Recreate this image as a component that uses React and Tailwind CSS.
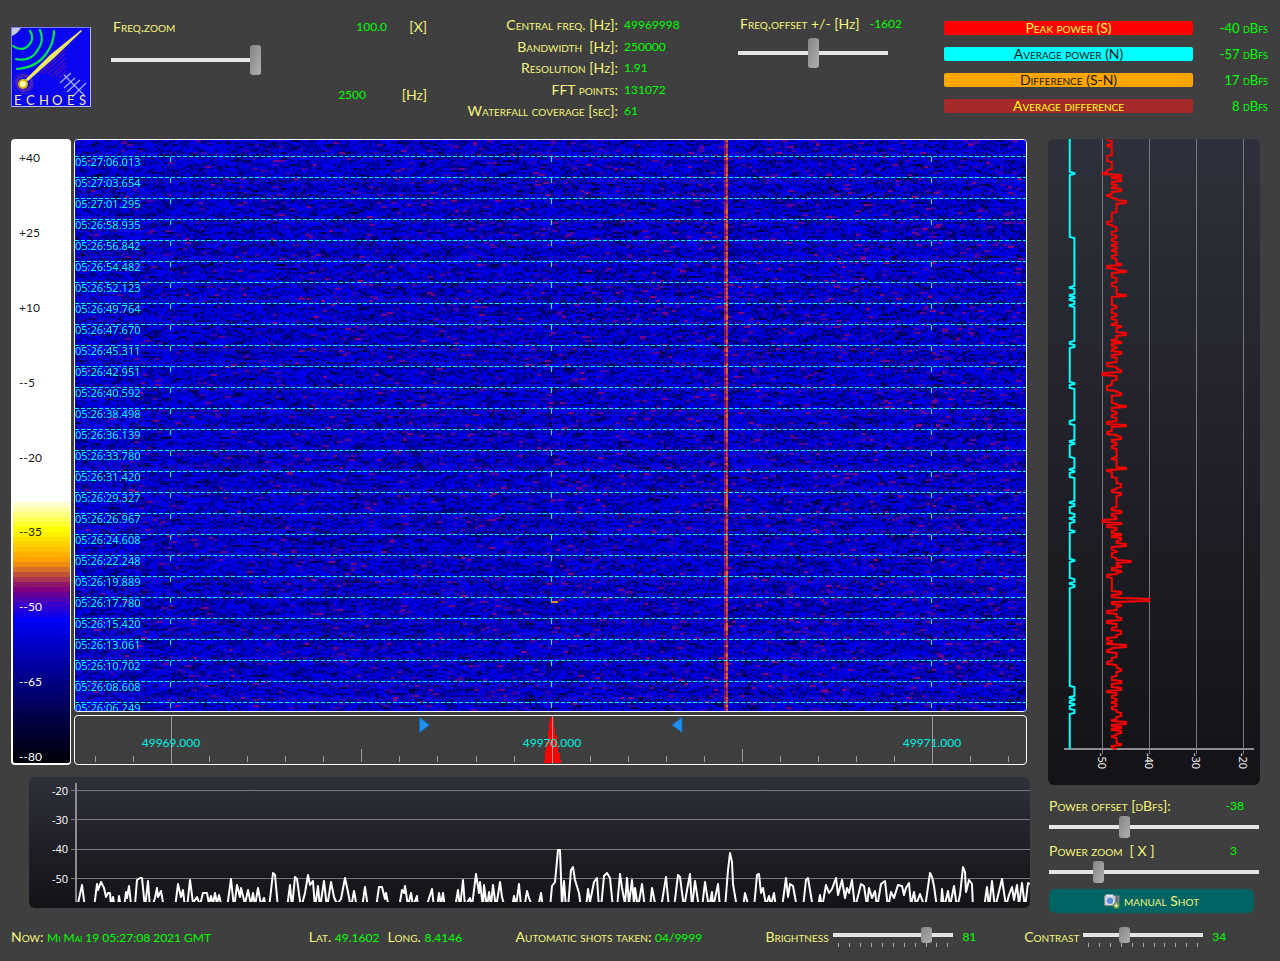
import { useEffect, useRef } from 'react'

const STATS = [
  ['Central freq. [Hz]:', '49969998'],
  ['Bandwidth \u00a0[Hz]:', '250000'],
  ['Resolution [Hz]:', '1.91'],
  ['FFT points:', '131072'],
  ['Waterfall coverage [sec]:', '61'],
]

const POWERS = [
  { label: 'Peak power (S)', value: '-40 dBfs', style: 'bg-[#ff0000] text-[#ffff40]' },
  { label: 'Average power (N)', value: '-57 dBfs', style: 'bg-[#00ffff] text-[#102020]' },
  { label: 'Difference (S-N)', value: '17 dBfs', style: 'bg-[#ffa500] text-[#201800]' },
  { label: 'Average difference', value: '8 dBfs', style: 'bg-[#a52a2a] text-[#ffff20]' },
]

const SCALE_LABELS = ['+40', '+25', '+10', '--5', '--20', '--35', '--50', '--65', '--80']

const SCALE_BANDS = [
  'bg-[#ffffd0]', 'bg-[#ffffa8]', 'bg-[#ffff80]', 'bg-[#ffff58]', 'bg-[#ffff2c]', 'bg-[#ffff00]',
  'bg-[#fff000]', 'bg-[#ffe000]', 'bg-[#ffd000]', 'bg-[#ffc000]', 'bg-[#ffb000]', 'bg-[#ffa000]',
  'bg-[#ee8c10]', 'bg-[#d67028]', 'bg-[#c05038]', 'bg-[#a83450]', 'bg-[#901868]', 'bg-[#800080]',
  'bg-[#680098]', 'bg-[#5000b0]', 'bg-[#3800c8]', 'bg-[#2800d8]', 'bg-[#1400e8]',
]

const TIMES = [
  '05:27:06.013', '05:27:03.654', '05:27:01.295', '05:26:58.935', '05:26:56.842', '05:26:54.482',
  '05:26:52.123', '05:26:49.764', '05:26:47.670', '05:26:45.311', '05:26:42.951', '05:26:40.592',
  '05:26:38.498', '05:26:36.139', '05:26:33.780', '05:26:31.420', '05:26:29.327', '05:26:26.967',
  '05:26:24.608', '05:26:22.248', '05:26:19.889', '05:26:17.780', '05:26:15.420', '05:26:13.061',
  '05:26:10.702', '05:26:08.608', '05:26:06.249',
]

// x,y pairs; everything below 902 is cut off by the plot area
const SPECTRUM =
  '77,908 82,885 85,908 94,908 97,884 98,890 101,882 104,888 106,897 108,893 110,893 111,906 113,897 115,908 ' +
  '118,908 119,896 121,908 124,908 126,892 127,898 129,886 131,904 135,904 137,880 140,878 142,878 145,908 ' +
  '148,881 150,908 153,904 155,898 157,888 158,897 161,891 164,908 175,908 178,884 181,897 183,890 185,908 ' +
  '187,908 190,880 193,903 197,897 200,905 203,893 207,893 209,904 211,896 213,904 215,893 217,904 219,895 222,908 ' +
  '227,908 231,879 234,908 237,885 240,897 241,888 245,904 248,890 251,905 253,893 255,906 258,888 261,905 264,898 ' +
  '266,908 269,908 273,873 275,875 278,908 287,908 290,885 292,908 295,877 297,879 301,908 305,893 308,875 310,885 ' +
  '313,881 315,908 318,886 320,908 324,881 327,908 331,882 334,897 337,904 341,899 345,878 348,892 351,908 354,891 ' +
  '357,908 362,908 365,887 368,908 376,908 379,887 382,887 385,899 386,893 389,908 399,908 402,890 404,893 405,886 ' +
  '408,906 411,893 413,906 417,896 418,908 426,908 432,889 434,908 437,908 439,893 441,905 443,893 445,908 ' +
  '455,908 458,890 460,908 463,880 465,906 470,898 472,906 476,874 479,893 480,882 483,908 484,885 487,908 489,892 ' +
  '491,905 493,885 496,908 500,882 502,897 505,908 512,908 514,896 516,906 519,884 521,906 525,903 527,891 529,898 ' +
  '533,908 538,908 541,893 543,908 550,908 552,886 555,882 558,850 560,850 562,906 564,881 566,908 568,908 571,870 ' +
  '573,867 575,880 579,893 581,908 586,908 588,889 590,902 594,882 597,878 599,908 601,908 604,876 607,873 610,878 ' +
  '613,908 617,908 620,874 622,888 625,904 627,878 629,904 632,880 634,904 635,888 638,908 642,884 645,908 650,908 ' +
  '652,888 656,908 661,908 666,877 669,908 674,908 678,875 680,877 684,908 687,890 690,874 692,908 695,881 699,908 ' +
  '702,908 705,882 709,908 712,892 713,908 718,884 720,908 725,908 728,870 730,853 732,862 733,884 737,908 743,908 ' +
  '745,893 749,908 754,908 757,875 759,874 761,893 763,888 766,905 769,896 771,905 774,893 776,908 782,908 786,878 ' +
  '788,897 790,884 793,886 797,908 803,908 806,880 808,878 813,908 818,908 820,895 822,908 826,885 829,893 832,889 ' +
  '836,878 838,895 842,880 845,898 847,888 849,893 852,880 855,908 861,884 864,886 867,906 869,888 872,898 875,891 ' +
  '877,908 881,884 885,881 888,908 891,892 894,898 898,885 902,886 904,895 906,888 909,883 911,905 914,892 916,905 ' +
  '920,894 925,908 930,873 932,877 934,886 937,908 941,908 942,889 944,908 948,891 950,906 954,886 957,908 960,895 ' +
  '963,867 965,872 966,892 969,880 972,884 973,908 984,908 987,887 989,908 992,881 995,908 1002,879 1006,906 ' +
  '1009,895 1012,887 1014,900 1017,885 1019,905 1022,883 1025,908 1028,883 1030,884'

// [row, dB] wherever the level changes
const PEAK_HISTORY = [
  [139, -49], [141, -48], [145, -49], [147, -48], [156, -49], [162, -48], [170, -49], [173, -50], [175, -46],
  [177, -48], [179, -46], [182, -48], [185, -47], [187, -48], [189, -46], [192, -48], [195, -49], [197, -48],
  [199, -47], [201, -45], [204, -47], [213, -48], [222, -49], [225, -48], [227, -47], [232, -48], [236, -47],
  [239, -48], [242, -47], [245, -48], [247, -47], [250, -48], [252, -47], [256, -48], [259, -47], [264, -46],
  [266, -49], [269, -47], [271, -45], [273, -48], [278, -47], [283, -48], [287, -47], [295, -45], [297, -48],
  [306, -47], [309, -48], [314, -47], [317, -48], [320, -47], [324, -48], [326, -46], [328, -47], [333, -45],
  [336, -47], [340, -48], [342, -46], [344, -48], [347, -47], [349, -48], [352, -46], [355, -48], [358, -47],
  [363, -49], [367, -47], [370, -46], [373, -50], [376, -47], [381, -48], [386, -49], [391, -47], [393, -46],
  [396, -48], [404, -47], [406, -45], [408, -48], [412, -47], [415, -48], [418, -47], [422, -49], [425, -45],
  [427, -48], [432, -49], [435, -47], [437, -46], [440, -48], [443, -47], [446, -48], [449, -47], [458, -48],
  [460, -47], [468, -45], [470, -49], [472, -48], [478, -47], [484, -46], [488, -47], [490, -48], [493, -46],
  [496, -47], [508, -48], [511, -46], [514, -48], [517, -47], [520, -50], [523, -46], [525, -49], [528, -47],
  [531, -48], [534, -46], [536, -48], [538, -46], [541, -47], [544, -45], [547, -48], [551, -47], [553, -48],
  [558, -47], [561, -44], [563, -47], [566, -46], [568, -48], [571, -46], [573, -47], [575, -49], [578, -48],
  [592, -46], [595, -48], [598, -46], [599, -40], [602, -48], [605, -46], [607, -47], [611, -49], [614, -47],
  [618, -46], [621, -49], [624, -47], [628, -48], [631, -46], [635, -47], [638, -49], [641, -48], [643, -49],
  [645, -45], [648, -48], [650, -49], [653, -47], [658, -48], [662, -49], [665, -47], [669, -46], [672, -47],
  [677, -48], [681, -46], [684, -48], [688, -46], [691, -49], [693, -47], [696, -48], [699, -47], [702, -48],
  [704, -47], [707, -48], [710, -47], [713, -46], [717, -47], [720, -48], [722, -45], [725, -48], [727, -46],
  [729, -48], [731, -46], [734, -47], [736, -48], [738, -47], [744, -46], [746, -48], [749, -47],
]

const NOISE_HISTORY = [
  [139, -57], [173, -56], [175, -57], [238, -56], [287, -57], [289, -56], [295, -57], [297, -56], [299, -57],
  [301, -56], [305, -57], [307, -56], [342, -57], [345, -56], [348, -57], [383, -56], [385, -57], [389, -56],
  [421, -57], [425, -56], [441, -57], [443, -56], [445, -57], [458, -56], [469, -57], [471, -56], [473, -57],
  [478, -56], [502, -57], [504, -56], [507, -57], [514, -56], [518, -57], [520, -56], [523, -57], [531, -56],
  [533, -57], [560, -56], [562, -57], [579, -56], [583, -57], [585, -56], [588, -57], [687, -56], [697, -57],
  [699, -56], [701, -57], [704, -56], [706, -57], [710, -56], [714, -57], [749, -57],
]

const dbToX = (db) => 1102.5 + (db + 50) * 4.68

function historyPoints(runs) {
  const points = []
  runs.forEach(([row, db], i) => {
    if (i > 0) points.push(`${dbToX(runs[i - 1][1])},${row - 1}`)
    points.push(`${dbToX(db)},${row}`)
  })
  return points.join(' ')
}

function Slider({ id, value, size, className = '' }) {
  const thumbs = {
    lg: 'h-[30px] [&::-webkit-slider-thumb]:h-[30px] [&::-webkit-slider-thumb]:-mt-[13px]',
    md: 'h-[22px] [&::-webkit-slider-thumb]:h-[22px] [&::-webkit-slider-thumb]:-mt-[9px]',
    sm: 'h-4 [&::-webkit-slider-thumb]:h-4 [&::-webkit-slider-thumb]:-mt-[6px]',
  }
  return (
    <input
      id={id}
      type="range"
      min="0"
      max="100"
      defaultValue={value}
      className={`block appearance-none bg-transparent [&::-webkit-slider-runnable-track]:h-1 [&::-webkit-slider-runnable-track]:bg-[#e3e5e3] [&::-webkit-slider-thumb]:appearance-none [&::-webkit-slider-thumb]:w-[11px] [&::-webkit-slider-thumb]:rounded-[3px] [&::-webkit-slider-thumb]:bg-linear-to-br [&::-webkit-slider-thumb]:from-[#858585] [&::-webkit-slider-thumb]:to-[#b0b0b0] ${thumbs[size]} ${className}`}
    />
  )
}

function TickSlider({ id, value }) {
  return (
    <div className="w-[120px]">
      <Slider id={id} value={value} size="sm" className="w-full" />
      <div className="flex justify-between px-[5px]">
        {Array.from({ length: 11 }, (_, i) => (
          <span key={i} className="h-1 w-px bg-[#b0b0a0]" />
        ))}
      </div>
    </div>
  )
}

function Logo() {
  return (
    <svg viewBox="0 0 80 80" className="size-20 shrink-0" role="img" aria-label="Echoes">
      <rect x="0.5" y="0.5" width="79" height="79" fill="#0a06f0" stroke="#7880ff" />
      <path d="M0.5 79.5h79v-79" fill="none" stroke="#b4b8ff" />
      <path d="M1 1h9L6 6 1 9z" fill="#c8ccd4" />
      <g fill="none" stroke="#00e848" strokeWidth="2.2" strokeLinecap="round">
        <path d="M2 19c5 4 12 4 16-1 4-4 4-10 1-14" />
        <path d="M5 32c9 2 17-1 21-8 5-6 6-14 3-21" />
        <path d="M6 42c12-1 22-5 29-15 6-8 8-15 8-23" />
      </g>
      <path d="M29 46l26-24M32 47l22-20M37 47l17-15M40 49l15-13M44 49l11-10M48 51l7-7" stroke="#7a1490" strokeWidth="1" />
      <g fill="none" stroke="#3c20c0">
        <circle cx="12" cy="57" r="10" />
        <circle cx="13" cy="56" r="7.5" strokeWidth="3" stroke="#4a22c0" />
      </g>
      <path d="M14 53L39 28 70 3 71 4 43 31 17 54z" fill="#f0e860" />
      <circle cx="12" cy="57" r="5" fill="#d8b400" />
      <circle cx="12" cy="57" r="3" fill="#ffffb0" />
      <path d="M53 48l20 20M49 56l11-10M53 61l11-10M56 65l13-12M61 70l14-14" stroke="#a8b0ec" strokeWidth="1.2" />
      <text y="78" fontSize="13" fill="#f4ec80" fontFamily="Lato, sans-serif">
        {['E', 'C', 'H', 'O', 'E', 'S'].map((c, i) => (
          <tspan key={i} x={[3, 15, 28, 41, 56, 68][i]}>{c}</tspan>
        ))}
      </text>
    </svg>
  )
}

function CameraIcon() {
  return (
    <svg viewBox="0 0 16 15" className="h-[15px] w-4" aria-hidden="true">
      <rect x="10" y="2" width="5" height="9" fill="#6c7078" stroke="#a8a8a8" strokeWidth="0.6" />
      <rect x="0.5" y="1.5" width="11" height="10" rx="1" fill="#c8c8cc" stroke="#8c8c90" />
      <rect x="2" y="0.5" width="7" height="2" fill="#e8e8ea" />
      <circle cx="6" cy="6.8" r="4" fill="#e8f0ff" />
      <circle cx="6" cy="6.8" r="3.2" fill="#5a90d8" />
      <circle cx="12.3" cy="11.6" r="3.2" fill="#5c9c28" />
      <path d="M12.3 9.6v4M10.3 11.6h4" stroke="#fff" strokeWidth="1.3" />
    </svg>
  )
}

const COLS = 476
const ROWS = 285

function drawNoise(canvas) {
  const ctx = canvas.getContext('2d')
  const img = ctx.createImageData(COLS, ROWS)
  let seed = 20210519
  const rand = () => {
    seed = (seed * 1664525 + 1013904223) >>> 0
    return seed / 4294967296
  }
  const put = (x, y, r, g, b) => {
    const i = (y * COLS + x) * 4
    img.data[i] = r
    img.data[i + 1] = g
    img.data[i + 2] = b
    img.data[i + 3] = 255
  }

  for (let y = 0; y < ROWS; y++) {
    let level = 0.7
    for (let x = 0; x < COLS; x++) {
      level = level * 0.45 + (1 - Math.pow(rand(), 2.4)) * 0.55
      put(x, y, 0, 0, Math.round(Math.max(0, Math.min(236, level * 245 + 15))))
    }
    // weak echoes, denser to the right
    for (let n = 0; n < 12; n++) {
      const x = Math.floor(Math.pow(rand(), 0.75) * (COLS - 3))
      const r = 40 + Math.pow(rand(), 2) * 90
      const w = 2 + Math.floor(rand() * 2)
      for (let k = 0; k < w; k++) put(x + k, y, r, 0, 210 - r * 0.6)
    }
    // carrier
    const heat = rand()
    const c = 326
    put(c - 1, y, 90 + heat * 90, heat * 40, 130 - heat * 40)
    put(c, y, 150 + heat * 80, 30 + heat * 80, 80 - heat * 50)
  }
  for (let x = 239; x < 242; x++) put(x, 230, 240, 140, 10)
  ctx.putImageData(img, 0, 0)
}

function Waterfall() {
  const ref = useRef(null)
  useEffect(() => drawNoise(ref.current), [])

  return (
    <div className="relative min-h-[573px] flex-1 overflow-hidden rounded border border-white bg-[#0000c8]">
      <canvas ref={ref} width={COLS} height={ROWS} className="absolute inset-0 size-full [image-rendering:pixelated]" />
      <svg viewBox="0 0 951 571" preserveAspectRatio="none" className="absolute inset-0 size-full" aria-hidden="true">
        <g stroke="#00ffff" shapeRendering="crispEdges">
          {TIMES.map((t, i) => (
            <g key={t}>
              <path d={`M0 ${16.5 + i * 21}h951`} strokeDasharray="4 2" />
              <path d={`M95.5 ${17 + i * 21}v5M476.5 ${17 + i * 21}v5M856.5 ${17 + i * 21}v5`} />
            </g>
          ))}
        </g>
      </svg>
      <ol className="absolute left-0 top-[11px] font-['Noto_Sans',sans-serif] text-[11px] leading-[21px] text-[#00ffff]">
        {TIMES.map((t) => (
          <li key={t}>{t}</li>
        ))}
      </ol>
    </div>
  )
}

function Ruler() {
  const ticks = Array.from({ length: 25 }, (_, i) => i)
  return (
    <svg viewBox="0 0 951 48" preserveAspectRatio="none" className="h-[50px] w-full rounded border border-white">
      <path d="M469 47v-3h1v-9h1v-9h2v-11h1v-9h1v-5h4v10h1v8h2v9h1v9h2v7h1v3z" fill="#ff0000" />
      <g stroke="#9c9c9c" shapeRendering="crispEdges">
        {ticks.map((i) => {
          const x = Math.round(20 + i * 38.05) + 0.5
          const top = i % 10 === 2 ? 0 : i % 10 === 7 ? 33 : 40
          return <path key={i} d={`M${x} ${top}V${top ? 46 : 48}`} />
        })}
      </g>
      <path d="M344.500 1.500v15l10-7.500z" fill="#2090f0" stroke="#1868b0" />
      <path d="M607 1.500v15l-10-7.500z" fill="#2090f0" stroke="#1868b0" />
      <g fill="#00f0e0" fontSize="12" textAnchor="middle" fontFamily="Lato, sans-serif">
        <text x="96" y="31">49969.000</text>
        <text x="477" y="31">49970.000</text>
        <text x="857" y="31">49971.000</text>
      </g>
    </svg>
  )
}

function ColorScale() {
  return (
    <div className="grid w-[60px] shrink-0 overflow-hidden rounded border-2 border-r border-white bg-white">
      <div className="col-start-1 row-start-1 flex flex-col">
        <div className="flex-1" />
        {SCALE_BANDS.map((c) => (
          <div key={c} className={`h-[5px] ${c}`} />
        ))}
        <div className="h-[146px] bg-linear-to-b from-[#0000fc] to-[#000008]" />
      </div>
      <ul className="col-start-1 row-start-1 flex flex-col justify-between pt-2.5 text-xs leading-[13px] pl-1.5">
        {SCALE_LABELS.map((l, i) => (
          <li key={l} className={i > 5 ? 'text-white' : 'text-[#202020]'}>{l}</li>
        ))}
      </ul>
    </div>
  )
}

function SpectrumChart() {
  return (
    <svg viewBox="29 777 1001 131" preserveAspectRatio="none"
      className="ml-[18px] mt-3 block h-[131px] rounded-md bg-linear-to-b from-[#2e313b] via-[#202028] to-[#121217]">
      <clipPath id="plot"><rect x="76" y="777" width="954" height="125" /></clipPath>
      <g stroke="#77777d" shapeRendering="crispEdges">
        {[790, 819, 849, 878].map((y) => (
          <path key={y} d={`M71 ${y + 0.5}H1030`} />
        ))}
      </g>
      <path d="M76 783v119" stroke="#8c8c90" strokeWidth="2" />
      <g fill="#ffffff" fontSize="11" textAnchor="end" fontFamily="'Open Sans', sans-serif">
        <text x="68" y="795">-20</text>
        <text x="68" y="824">-30</text>
        <text x="68" y="853">-40</text>
        <text x="68" y="883">-50</text>
      </g>
      <polyline points={SPECTRUM} clipPath="url(#plot)" fill="none" stroke="#ffffff" strokeWidth="2" strokeLinejoin="round" />
    </svg>
  )
}

function PowerHistory() {
  return (
    <svg viewBox="1048 139 212 646" preserveAspectRatio="none"
      className="min-h-[646px] w-full flex-1 rounded-md bg-linear-to-b from-[#2e313b] via-[#202028] to-[#121217]">
      <g stroke="#77777d" shapeRendering="crispEdges">
        {[1102, 1149, 1196, 1243].map((x) => (
          <path key={x} d={`M${x + 0.5} 139V754`} />
        ))}
      </g>
      <path d="M1064 749h190" stroke="#8c8c90" strokeWidth="2" />
      <g fill="#ffffff" fontSize="11" fontFamily="'Open Sans', sans-serif">
        {[[1102, '-50'], [1149, '-40'], [1196, '-30'], [1243, '-20']].map(([x, label]) => (
          <text key={label} transform={`translate(${x - 4} 753) rotate(90)`}>{label}</text>
        ))}
      </g>
      <g fill="none" strokeWidth="2">
        <polyline points={historyPoints(NOISE_HISTORY)} stroke="#00ffff" />
        <polyline points={historyPoints(PEAK_HISTORY)} stroke="#ff0000" />
      </g>
    </svg>
  )
}

function Header() {
  return (
    <header className="grid h-[139px] grid-cols-[100fr_329fr_298fr_206fr_324fr] pl-[11px] pr-3 leading-[14px]">
      <div className="pt-[27px]"><Logo /></div>

      <div className="w-[316px] pt-5">
        <div className="flex">
          <label htmlFor="zoom" className="flex-1 pl-0.5">Freq.zoom</label>
          <output htmlFor="zoom" className="text-xs leading-[14px] text-[#00ff00]">100.0</output>
          <span className="w-10 text-right">[X]</span>
        </div>
        <Slider id="zoom" value={100} size="lg" className="mt-[11px] w-[150px]" />
        <div className="mt-[13px] flex justify-end">
          <output htmlFor="zoom" className="text-xs leading-[14px] text-[#00ff00]">2500</output>
          <span className="w-[61px] text-right">[Hz]</span>
        </div>
      </div>

      <dl className="mt-3.5 grid h-[107px] grid-cols-[178px_1fr] content-between gap-x-1.5 leading-[21px]">
        {STATS.map(([name, value]) => (
          <div key={name} className="contents">
            <dt className="text-right">{name}</dt>
            <dd className="text-xs leading-[21px] text-[#00ff00]">{value}</dd>
          </div>
        ))}
      </dl>

      <div className="pt-[17px]">
        <div className="flex w-[164px] justify-between pl-0.5">
          <label htmlFor="offset">Freq.offset +/- [Hz]</label>
          <output htmlFor="offset" className="text-xs leading-[14px] text-[#00ff00]">-1602</output>
        </div>
        <Slider id="offset" value={50} size="lg" className="mt-[7px] w-[150px]" />
      </div>

      <ul className="flex flex-col gap-3 pt-[21px]">
        {POWERS.map((p) => (
          <li key={p.label} className="flex">
            <span className={`flex-1 rounded-xs text-center ${p.style}`}>{p.label}</span>
            <span className="w-[75px] text-right text-[13px] leading-[14px] text-[#00ff00]">{p.value}</span>
          </li>
        ))}
      </ul>
    </header>
  )
}

export default function App() {
  return (
    <div className="flex min-h-screen flex-col bg-[#3f3f3f] font-[Lato,sans-serif] text-sm text-[#f4f47c] [font-variant-caps:small-caps]">
      <Header />

      <main className="flex flex-1 gap-[18px] pl-[11px] pr-5">
        <section className="flex min-w-0 flex-1 flex-col pb-[5px]">
          <div className="flex flex-1 gap-[3px] pr-[3px]">
            <ColorScale />
            <div className="flex min-w-0 flex-1 flex-col gap-[3px]">
              <Waterfall />
              <Ruler />
            </div>
          </div>
          <SpectrumChart />
        </section>

        <aside className="flex w-[212px] flex-col">
          <PowerHistory />
          <div className="mt-3.5 flex justify-between pl-px pr-4 leading-[14px]">
            <label htmlFor="power-offset">Power offset [dBfs]:</label>
            <output htmlFor="power-offset" className="text-xs leading-[14px] text-[#00ff00]">-38</output>
          </div>
          <Slider id="power-offset" value={35} size="md" className="mx-px mt-[3px]" />
          <div className="mt-1.5 flex justify-between pl-px pr-[23px] leading-[14px]">
            <label htmlFor="power-zoom">Power zoom &nbsp;[ X ]</label>
            <output htmlFor="power-zoom" className="text-xs leading-[14px] text-[#00ff00]">3</output>
          </div>
          <Slider id="power-zoom" value={22} size="md" className="mx-px mt-[3px]" />
          <button type="button" className="ml-px mr-[6px] mt-1.5 flex h-6 items-center justify-center gap-1 rounded-md bg-[#006464] [font-variant-caps:small-caps]">
            <CameraIcon />
            manual Shot
          </button>
        </aside>
      </main>

      <footer className="grid h-12 grid-cols-[298fr_207fr_250fr_259fr_244fr] items-center pl-[11px] pr-3">
        <p>Now: <time className="text-xs text-[#00ff00]">Mi Mai 19 05:27:08 2021 GMT</time></p>
        <p>
          Lat. <span className="text-xs text-[#00ff00]">49.1602</span>
          <span className="ml-2">Long.</span> <span className="text-xs text-[#00ff00]">8.4146</span>
        </p>
        <p>Automatic shots taken: <span className="text-xs text-[#00ff00]">04/9999</span></p>
        <div className="flex items-center">
          <label htmlFor="brightness" className="w-[68px]">Brightness</label>
          <TickSlider id="brightness" value={80} />
          <output htmlFor="brightness" className="ml-[9px] text-xs text-[#00ff00]">81</output>
        </div>
        <div className="flex items-center">
          <label htmlFor="contrast" className="w-[59px]">Contrast</label>
          <TickSlider id="contrast" value={33} />
          <output htmlFor="contrast" className="ml-[9px] text-xs text-[#00ff00]">34</output>
        </div>
      </footer>
    </div>
  )
}
